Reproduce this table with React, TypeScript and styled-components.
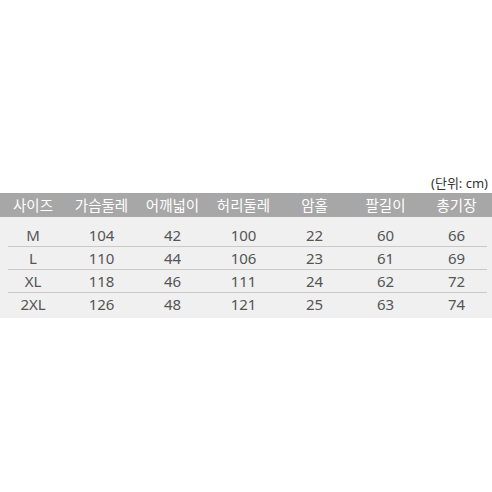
import React from 'react';
import styled, { createGlobalStyle } from 'styled-components';

const GlobalStyle = createGlobalStyle`
  html, body {
    margin: 0;
    padding: 0;
    background: #ffffff;
  }
  body {
    font-family: 'Noto Sans', 'Noto Sans CJK KR', sans-serif;
  }
`;

const Page = styled.div`
  width: 492px;
  height: 492px;
  padding-top: 174px;
  box-sizing: border-box;
  overflow: hidden;
`;

const Unit = styled.div`
  text-align: right;
  padding-right: 4px;
  font-size: 13px;
  line-height: 19px;
  color: #333333;
`;

const Table = styled.div`
  width: 492px;
`;

const HeaderRow = styled.div`
  display: grid;
  grid-template-columns: 66px repeat(6, 71px);
  height: 24px;
  align-items: center;
  background: #a7a7a7;
  color: #ffffff;
  font-size: 14.5px;
`;

const Body = styled.div`
  background: #f0f0f0;
  padding: 7px 0 2px 0;
`;

const Row = styled.div<{ $last?: boolean }>`
  position: relative;
  display: grid;
  grid-template-columns: 66px repeat(6, 71px);
  height: 23px;
  align-items: center;
  font-size: 15px;
  color: #555555;

  &::after {
    content: '';
    display: ${(p) => (p.$last ? 'none' : 'block')};
    position: absolute;
    left: 8px;
    right: 5px;
    bottom: 0;
    height: 1px;
    background: #c9c9c9;
  }
`;

const Cell = styled.div`
  text-align: center;
  line-height: 1;
`;

const headers = ['사이즈', '가슴둘레', '어깨넓이', '허리둘레', '암홀', '팔길이', '총기장'];

const rows = [
  ['M', '104', '42', '100', '22', '60', '66'],
  ['L', '110', '44', '106', '23', '61', '69'],
  ['XL', '118', '46', '111', '24', '62', '72'],
  ['2XL', '126', '48', '121', '25', '63', '74'],
];

export default function App() {
  return (
    <Page>
      <GlobalStyle />
      <Unit>(단위: cm)</Unit>
      <Table>
        <HeaderRow>
          {headers.map((h) => (
            <Cell key={h}>{h}</Cell>
          ))}
        </HeaderRow>
        <Body>
          {rows.map((r, i) => (
            <Row key={r[0]} $last={i === rows.length - 1}>
              {r.map((c, j) => (
                <Cell key={j}>{c}</Cell>
              ))}
            </Row>
          ))}
        </Body>
      </Table>
    </Page>
  );
}
